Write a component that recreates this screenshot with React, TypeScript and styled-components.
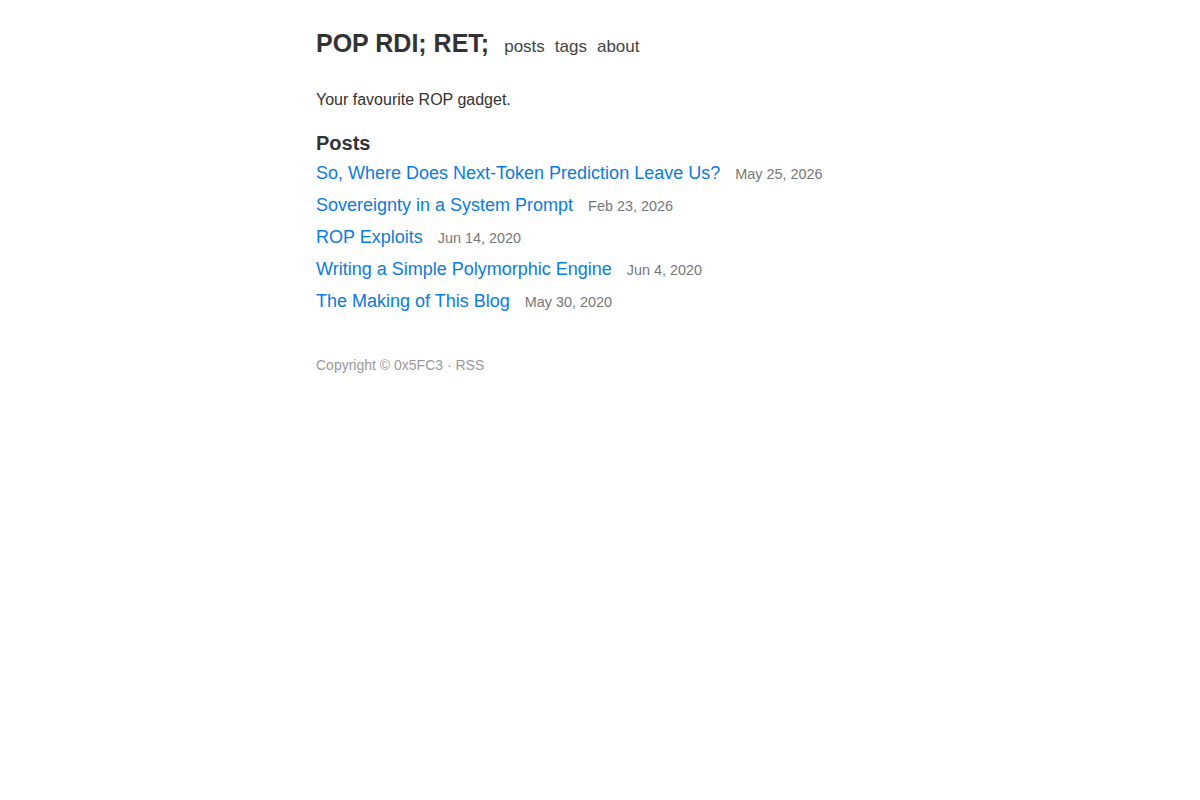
import React from 'react';
import styled, { createGlobalStyle } from 'styled-components';

const posts = [
  { title: 'So, Where Does Next-Token Prediction Leave Us?', date: 'May 25, 2026' },
  { title: 'Sovereignty in a System Prompt', date: 'Feb 23, 2026' },
  { title: 'ROP Exploits', date: 'Jun 14, 2020' },
  { title: 'Writing a Simple Polymorphic Engine', date: 'Jun 4, 2020' },
  { title: 'The Making of This Blog', date: 'May 30, 2020' },
];

function App() {
  return (
    <>
      <GlobalStyle />
      <Page>
        <Header>
          <SiteTitle href="#">POP RDI; RET;</SiteTitle>
          <Nav>
            <NavLink href="#">posts</NavLink>
            <NavLink href="#">tags</NavLink>
            <NavLink href="#">about</NavLink>
          </Nav>
        </Header>
        <Tagline>Your favourite ROP gadget.</Tagline>
        <SectionTitle>Posts</SectionTitle>
        <PostList>
          {posts.map((post, key) => (
            <PostItem key={key}>
              <PostLink href="#">{post.title}</PostLink>
              <PostDate>{post.date}</PostDate>
            </PostItem>
          ))}
        </PostList>
        <Footer>
          Copyright © 0x5FC3 · <FooterLink href="#">RSS</FooterLink>
        </Footer>
      </Page>
    </>
  );
}
export default App;

const GlobalStyle = createGlobalStyle`
  body {
    margin: 0;
    background: #fff;
    color: #333;
    font-family: 'Liberation Sans', Arial, Helvetica, sans-serif;
  }
  a {
    text-decoration: none;
  }
`;

const Page = styled.main`
  max-width: 568px;
  margin: 0 auto;
  padding-top: 26px;
`;

const Header = styled.header`
  display: flex;
  align-items: baseline;
  gap: 15px;
`;

const SiteTitle = styled.a`
  font-size: 25px;
  font-weight: bold;
  color: #333;
  line-height: 34px;
`;

const Nav = styled.nav`
  display: flex;
  gap: 10px;
`;

const NavLink = styled.a`
  font-size: 17px;
  color: #444;
`;

const Tagline = styled.p`
  margin: 30px 0 0;
  font-size: 16px;
  line-height: 20px;
  color: #333;
`;

const SectionTitle = styled.h2`
  margin: 20px 0 0;
  font-size: 20px;
  line-height: 26px;
  font-weight: bold;
  color: #333;
`;

const PostList = styled.ul`
  list-style: none;
  margin: 6px 0 0;
  padding: 0;
`;

const PostItem = styled.li`
  display: flex;
  align-items: baseline;
  gap: 15px;
  height: 32px;
  line-height: 22px;
`;

const PostLink = styled.a`
  font-size: 18px;
  color: #0b7bdc;
`;

const PostDate = styled.span`
  font-size: 14.4px;
  color: #777;
`;

const Footer = styled.footer`
  margin-top: 35px;
  font-size: 14px;
  color: #999;
`;

const FooterLink = styled.a`
  color: #999;
`;
